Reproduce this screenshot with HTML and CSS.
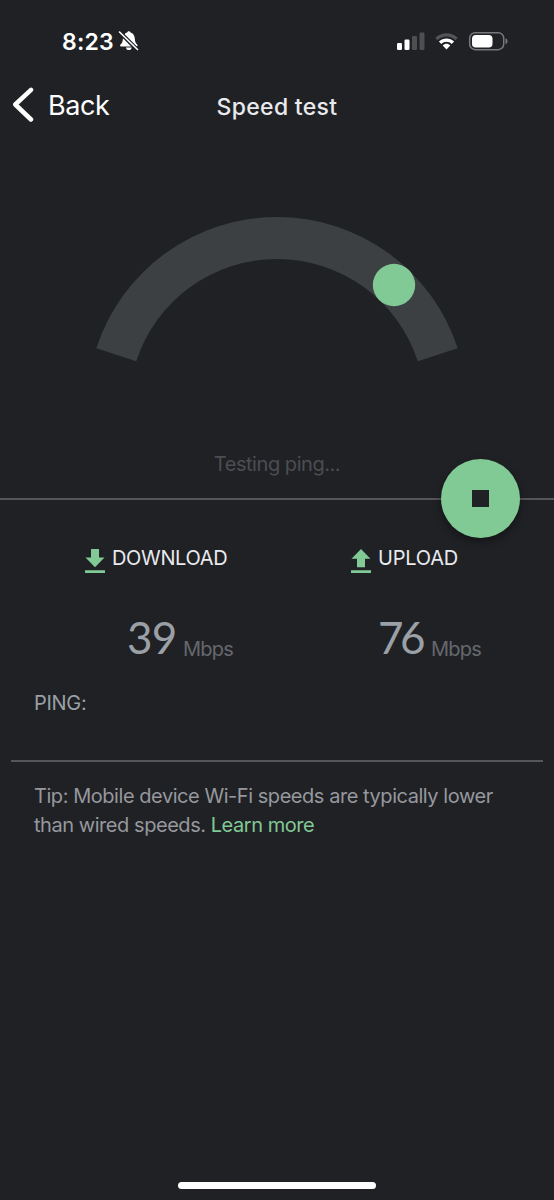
FILE: index.html
```html
<!DOCTYPE html>
<html lang="en">
<head>
<meta charset="utf-8">
<title>Speed test</title>
<link rel="stylesheet" href="styles.css">
</head>
<body>
<div class="screen">
  <div class="status">
    <span class="time">8:23</span>
    <svg class="bell" width="22" height="22" viewBox="0 0 22 22">
      <path fill="#fff" d="M10.8 1.2c.9 0 1.5.6 1.7 1.3 2.700.8 4.200 3 4.300 6 .1 3.300.8 4.500 2.400 6 .8.8.4 1.900-.7 1.900H3.200c-1.200 0-1.500-1.100-.7-1.900 1.600-1.500 2.300-2.700 2.400-6 .1-3 1.600-5.200 4.200-6 .2-.7.8-1.300 1.700-1.300zM7.900 17.500h5.900c-.3 1.600-1.500 2.600-3 2.600s-2.600-1-2.900-2.600z"/>
      <path stroke="#202125" stroke-width="4" d="M1 1.500 19.500 20"/>
      <path stroke="#fff" stroke-width="1.600" stroke-linecap="round" d="M1.500 2 19.500 19.500"/>
    </svg>
    <svg class="indicators" width="114" height="24" viewBox="0 0 114 24">
      <rect x="1" y="14" width="5" height="7" rx="1.300" fill="#fff"/>
      <rect x="8.500" y="10.500" width="5" height="10.500" rx="1.300" fill="#fff"/>
      <rect x="16" y="7" width="5" height="14" rx="1.300" fill="#4e4f52"/>
      <rect x="23.500" y="3.500" width="5" height="17.500" rx="1.300" fill="#4e4f52"/>
      <path fill="#535457" d="M39.300 8.800c6-6.200 16.400-6.200 22.400 0l-2.300 2.400c-4.800-5-13-5-17.800 0z"/>
      <path fill="#fff" d="M42.900 12.600c4.200-4.300 11-4.300 15.200 0l-2.400 2.400c-2.900-2.900-7.500-2.900-10.400 0zM46.700 16.400c2.100-2.100 5.500-2.100 7.600 0l-3.800 4.200z"/>
      <rect x="73.700" y="3.700" width="34" height="17" rx="5.500" fill="none" stroke="#77787b" stroke-width="1.500"/>
      <rect x="76" y="6" width="20.500" height="12.500" rx="3.800" fill="#fff"/>
      <path fill="#77787b" d="M109.500 9.200c2.700.9 2.700 5.100 0 6z"/>
    </svg>
  </div>
  <header class="header">
    <a class="back"><svg width="24" height="36" viewBox="0 0 24 36"><path d="M20 3.800 4.300 18.500 20 33.500" transform="translate(0 -1)" fill="none" stroke="#fff" stroke-width="4.500" stroke-linecap="round" stroke-linejoin="round"/></svg><span>Back</span></a>
    <h1 class="title">Speed test</h1>
  </header>
  <section class="gauge">
    <svg width="394" height="180" viewBox="80 200 394 180">
      <path fill="#3c4043" d="M96.300 348.300A190 190 0 0 1 457.700 348.300L417.800 361.300A148 148 0 0 0 136.200 361.300Z"/>
      <circle cx="394" cy="285" r="21.200" fill="#81c995"/>
    </svg>
    <p class="phase">Testing ping...</p>
    <button class="stop" aria-label="Stop"><span class="square"></span></button>
  </section>
  <section class="results">
    <div class="result download">
      <h2><svg width="20" height="25" viewBox="0 0 20 25"><path fill="#81c995" d="M6 0h8v8.500h5.500L10 18.300.500 8.500H6zM0 21.200h20v2.700H0z"/></svg><span>DOWNLOAD</span></h2>
      <p><b>39</b><span class="unit">Mbps</span></p>
    </div>
    <div class="result upload">
      <h2><svg width="20" height="25" viewBox="0 0 20 25"><path fill="#81c995" d="M6 18.300h8V9.800h5.500L10 0 .5 9.800H6zM0 21.200h20v2.700H0z"/></svg><span>UPLOAD</span></h2>
      <p><b>76</b><span class="unit">Mbps</span></p>
    </div>
  </section>
  <p class="ping">PING:</p>
  <footer class="tip"><div class="line1">Tip: Mobile device Wi-Fi speeds are typically lower</div><div class="line2">than wired speeds. <a>Learn more</a></div></footer>
  <div class="home"></div>
</div>
</body>
</html>
```
FILE: styles.css
```css
* { box-sizing: border-box; margin: 0; padding: 0; }
body { background: #202125; font-family: Inter, "Liberation Sans", sans-serif; color: #e8eaed; }
.screen { width: 554px; height: 1200px; display: flex; flex-direction: column; overflow: hidden; }
.status { height: 80px; display: flex; align-items: flex-start; padding: 29px 44px 0 62px; }
.time { font-size: 23px; line-height: 26px; font-weight: 600; color: #fff; width: 56px; letter-spacing: 0.2px; }
.bell { margin-top: 1px; }
.indicators { margin-left: auto; }
.header { height: 60px; display: grid; grid-template-columns: 200px 154px 200px; padding-top: 7px; }
.back { display: flex; height: 36px; align-items: center; padding-left: 11px; color: #fff; font-size: 27px; letter-spacing: -0.4px; }
.back span { margin-left: 13px; }
.title { font-size: 23px; font-weight: 450; line-height: 40px; letter-spacing: 0.3px; text-align: center; white-space: nowrap; }
.gauge { height: 360px; position: relative; border-bottom: 2px solid #55565a; padding-top: 60px; text-align: center; }
.gauge svg { display: block; margin: 0 auto; }
.phase { font-size: 20px; line-height: 24px; letter-spacing: -0.45px; color: #4c4d51; margin-top: 72px; }
.stop { position: absolute; left: 441px; top: 319px; width: 79px; height: 79px; border: 0; border-radius: 50%; background: #81c995; display: flex; align-items: center; justify-content: center; box-shadow: 0 4px 9px rgba(0,0,0,.38); }
.square { width: 17px; height: 17px; background: #202125; }
.results { height: 180px; display: grid; grid-template-columns: 266px 288px; padding-top: 46px; }
.result { padding-left: 85px; }
.result h2 { display: flex; gap: 7px; height: 26px; font-size: 20px; line-height: 24px; font-weight: 400; letter-spacing: -0.35px; }
.upload h2 { letter-spacing: -0.2px; }
.result h2 svg { margin-top: 3px; }
.result p { display: flex; align-items: baseline; margin-top: 38px; line-height: 54px; padding-left: 42px; }
.upload p { padding-left: 27px; }
.result b { font-family: Lato, sans-serif; font-size: 44px; font-weight: 400; color: #9aa0a6; letter-spacing: -0.8px; }
.upload b { letter-spacing: -3.5px; }
.unit { font-size: 20px; color: #66686d; margin-left: 6.5px; letter-spacing: -0.75px; position: relative; top: 2px; }
.upload .unit { margin-left: 9px; }
.ping { height: 82px; margin: 0 11px; padding: 11px 23px 0; border-bottom: 2px solid #55565a; font-size: 20px; line-height: 24px; letter-spacing: -0.3px; color: #9aa0a6; }
.tip { padding: 20px 34px 0; font-size: 20px; line-height: 29px; letter-spacing: -0.45px; color: #96989d; white-space: nowrap; }
.tip a { color: #81c995; }
.home { width: 198px; height: 7px; border-radius: 4px; background: #fff; margin: auto auto 11px; }
```
